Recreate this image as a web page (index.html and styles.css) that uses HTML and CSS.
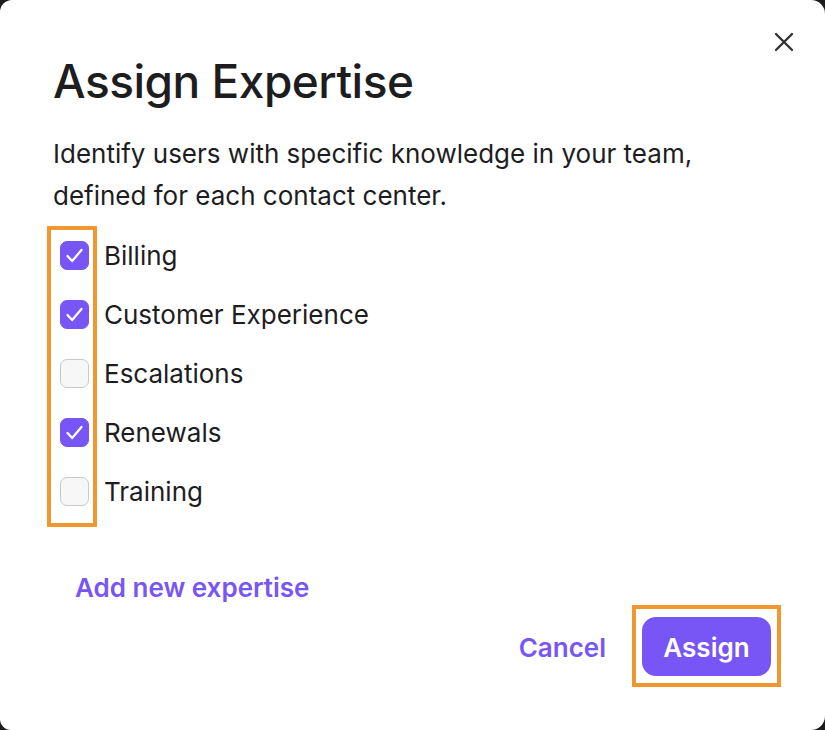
FILE: index.html
```html
<!DOCTYPE html>
<html lang="en">
<head>
<meta charset="utf-8">
<title>Assign Expertise</title>
<link rel="stylesheet" href="styles.css">
</head>
<body>
<div class="dialog">
  <button class="close" aria-label="Close">
    <svg width="20" height="20" viewBox="0 0 20 20"><path d="M2 2 L18 18 M18 2 L2 18" stroke="#333" stroke-width="2.4" stroke-linecap="round" fill="none"/></svg>
  </button>
  <h1 class="title">Assign Expertise</h1>
  <p class="desc">Identify users with specific knowledge in your team,<br>defined for each contact center.</p>
  <div class="list">
    <div class="hl hl-list"></div>
    <label class="row"><span class="box checked"><svg viewBox="0 0 29 29"><path d="M7 15 L12 20.5 L22 8.5" stroke="#fff" stroke-width="2.4" fill="none" stroke-linecap="round" stroke-linejoin="round"/></svg></span><span class="label">Billing</span></label>
    <label class="row"><span class="box checked"><svg viewBox="0 0 29 29"><path d="M7 15 L12 20.5 L22 8.5" stroke="#fff" stroke-width="2.4" fill="none" stroke-linecap="round" stroke-linejoin="round"/></svg></span><span class="label">Customer Experience</span></label>
    <label class="row"><span class="box"></span><span class="label">Escalations</span></label>
    <label class="row"><span class="box checked"><svg viewBox="0 0 29 29"><path d="M7 15 L12 20.5 L22 8.5" stroke="#fff" stroke-width="2.4" fill="none" stroke-linecap="round" stroke-linejoin="round"/></svg></span><span class="label">Renewals</span></label>
    <label class="row"><span class="box"></span><span class="label">Training</span></label>
  </div>
  <a class="add">Add new expertise</a>
  <div class="footer">
    <button class="cancel">Cancel</button>
    <span class="assign-wrap"><button class="assign">Assign</button></span>
  </div>
</div>
</body>
</html>
```

FILE: styles.css
```css
* { box-sizing: border-box; }
html, body { margin: 0; padding: 0; }
body {
  background: #1c1c1e;
  font-family: Inter, "Noto Sans", sans-serif;
  color: #1d1d1f;
}
.dialog {
  position: relative;
  width: 825px;
  height: 730px;
  background: #fff;
  border-radius: 12px 14px 14px 11px;
  padding: 55px 54px 0 53px;
  display: flex;
  flex-direction: column;
}
.close {
  position: absolute;
  top: 32px;
  right: 31px;
  width: 20px;
  height: 20px;
  padding: 0;
  border: 0;
  background: none;
  display: flex;
}
.title {
  margin: 0;
  font-size: 46px;
  line-height: 52px;
  font-weight: 500;
  letter-spacing: -0.5px;
}
.desc {
  margin: 26px 0 0;
  font-size: 26px;
  line-height: 42px;
  font-weight: 400;
}
.list {
  position: relative;
  margin: 9px 0 0 7px;
  display: flex;
  flex-direction: column;
}
.row {
  height: 59px;
  display: flex;
  align-items: center;
  gap: 15px;
  font-size: 26px;
}
.box {
  width: 29px;
  height: 29px;
  border-radius: 7px;
  border: 1px solid #c9c9cc;
  background: #f7f7f8;
  flex: none;
  display: flex;
}
.box.checked {
  background: #7856f6;
  border-color: #7856f6;
}
.box svg { width: 100%; height: 100%; }
.hl {
  position: absolute;
  border: 4px solid #f0982f;
  pointer-events: none;
}
.hl-list {
  left: -13px;
  top: 0;
  width: 50px;
  height: 301px;
}
.add {
  margin: 49px 0 0 22px;
  font-size: 26px;
  line-height: 36px;
  font-weight: 600;
  color: #7856f6;
}
.footer {
  margin-top: 11px;
  display: flex;
  justify-content: flex-end;
  align-items: center;
}
.cancel, .assign {
  font-family: inherit;
  font-size: 26px;
  font-weight: 600;
  border: 0;
  cursor: pointer;
  line-height: 1;
}
.cancel {
  background: none;
  color: #7856f6;
  padding: 2px 0 0;
  margin-right: 36px;
}
.assign-wrap {
  position: relative;
  display: flex;
}
.assign-wrap::after {
  content: "";
  position: absolute;
  left: -10px;
  right: -10px;
  top: -12px;
  bottom: -11px;
  border: 4px solid #f0982f;
  pointer-events: none;
}
.assign {
  height: 59px;
  width: 129px;
  padding-top: 3px;
  border-radius: 14px;
  background: #7856f6;
  color: #fff;
}
```
